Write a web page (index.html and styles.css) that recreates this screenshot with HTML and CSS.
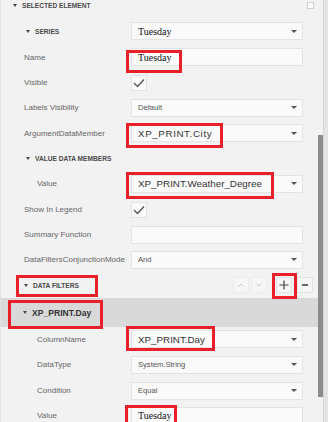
FILE: index.html
```html
<!DOCTYPE html>
<html lang="en">
<head>
    <meta charset="UTF-8">
    <title>Chart Designer - Properties</title>
    <link rel="stylesheet" href="styles.css">
</head>
<body>
    <div class="panel">
        <div class="head top-head">
            <span class="tri"></span>SELECTED ELEMENT
            <span class="corner-box"></span>
        </div>

        <div class="row h26">
            <div class="sub"><span class="tri"></span>SERIES</div>
            <div class="ctl select"><span class="serif">Tuesday</span><span class="caret"></span></div>
        </div>
        <div class="row h26">
            <div class="lbl">Name</div>
            <div class="ctl"><span class="serif">Tuesday</span><span class="mark m-name"></span></div>
        </div>
        <div class="row h25">
            <div class="lbl">Visible</div>
            <div class="check">
                <svg width="12" height="10" viewBox="0 0 12 10"><polyline points="1,5 4.5,8.5 11,1.5" fill="none" stroke="#555" stroke-width="1.4"/></svg>
            </div>
        </div>
        <div class="row h25">
            <div class="lbl">Labels Visibility</div>
            <div class="ctl select"><span class="small">Default</span><span class="caret"></span></div>
        </div>
        <div class="row h26">
            <div class="lbl">ArgumentDataMember</div>
            <div class="ctl select"><span class="big wide">XP_PRINT.City</span><span class="caret"></span><span class="mark m-city"></span></div>
        </div>

        <div class="head sub-head h24"><span class="tri"></span>VALUE DATA MEMBERS</div>

        <div class="row h27">
            <div class="lbl indent">Value</div>
            <div class="ctl select"><span class="big">XP_PRINT.Weather_Degree</span><span class="caret"></span><span class="mark m-value"></span></div>
        </div>
        <div class="row h25">
            <div class="lbl">Show In Legend</div>
            <div class="check">
                <svg width="12" height="10" viewBox="0 0 12 10"><polyline points="1,5 4.5,8.5 11,1.5" fill="none" stroke="#555" stroke-width="1.4"/></svg>
            </div>
        </div>
        <div class="row h25">
            <div class="lbl">Summary Function</div>
            <div class="ctl"></div>
        </div>
        <div class="row h25">
            <div class="lbl">DataFiltersConjunctionMode</div>
            <div class="ctl select"><span class="small">And</span><span class="caret"></span></div>
        </div>

        <div class="head filters-head">
            <span class="tri"></span>DATA FILTERS
            <span class="mark m-filters"></span>
            <div class="tools">
                <span class="btn faint">
                    <svg width="8" height="6" viewBox="0 0 8 6"><polyline points="1.5,4.5 4,2 6.5,4.5" fill="none" stroke="#c8c8c8" stroke-width="1"/></svg>
                </span>
                <span class="btn faint">
                    <svg width="8" height="6" viewBox="0 0 8 6"><polyline points="1.5,1.5 4,4 6.5,1.5" fill="none" stroke="#c8c8c8" stroke-width="1"/></svg>
                </span>
                <span class="btn plus">
                    <svg width="10" height="10" viewBox="0 0 10 10"><path d="M5 0.5v9M0.5 5h9" stroke="#444" stroke-width="1.2"/></svg>
                    <span class="mark m-plus"></span>
                </span>
                <span class="btn">
                    <svg width="8" height="8" viewBox="0 0 8 8"><path d="M1 4h6" stroke="#444" stroke-width="1.6"/></svg>
                </span>
            </div>
        </div>

        <div class="band">
            <span class="tri"></span>XP_PRINT.Day
            <span class="mark m-band"></span>
        </div>

        <div class="row h24">
            <div class="lbl indent">ColumnName</div>
            <div class="ctl select"><span class="big">XP_PRINT.Day</span><span class="caret"></span><span class="mark m-column"></span></div>
        </div>
        <div class="row h27">
            <div class="lbl indent">DataType</div>
            <div class="ctl select"><span class="small">System.String</span><span class="caret"></span></div>
        </div>
        <div class="row h25">
            <div class="lbl indent">Condition</div>
            <div class="ctl select"><span class="small">Equal</span><span class="caret"></span></div>
        </div>
        <div class="row h25">
            <div class="lbl indent">Value</div>
            <div class="ctl"><span class="serif">Tuesday</span><span class="mark m-filter-value"></span></div>
        </div>
    </div>

    <div class="scroll"><div class="thumb"></div></div>
    <div class="edge"></div>
</body>
</html>
```

FILE: styles.css
```css
body {
    margin: 0;
    width: 328px;
    height: 422px;
    overflow: hidden;
    display: flex;
    background-color: #f2f2f2;
    font-family: "Liberation Sans", Arial, sans-serif;
    color: #666;
}
.panel {
    width: 318px;
    flex: none;
    box-sizing: border-box;
    border-left: 1px solid #e2e2e2;
}
.scroll {
    width: 5px;
    flex: none;
}
.thumb {
    margin-top: 135px;
    height: 262px;
    background-color: #8c8c8c;
}
.edge {
    flex: 1;
    background-color: #e4e4e4;
    border-left: 1px solid #d6d6d6;
}

/* section headers */
.head {
    display: flex;
    align-items: center;
    font-size: 6.6px;
    font-weight: bold;
    color: #4a4a4a;
    position: relative;
}
.tri {
    width: 0;
    height: 0;
    border-left: 2px solid transparent;
    border-right: 2px solid transparent;
    border-top: 3px solid #444;
    margin-right: 5px;
}
.top-head {
    margin-top: -8px;
    height: 26px;
    padding-left: 12px;
}
.corner-box {
    width: 5px;
    height: 5px;
    margin-left: auto;
    margin-right: 4px;
    background-color: #fff;
    border: 1px solid #cfcfcf;
}
.sub-head {
    padding-left: 25px;
}
.sub {
    display: flex;
    align-items: center;
    padding-left: 25px;
    font-size: 6.6px;
    font-weight: bold;
    color: #4a4a4a;
}
.filters-head {
    height: 26px;
    padding-left: 23px;
}
.tools {
    margin-left: auto;
    padding-right: 5px;
    display: flex;
    align-items: center;
}
.btn {
    width: 16px;
    height: 16px;
    box-sizing: border-box;
    border: 1px solid #e2e2e2;
    background-color: #f6f6f6;
    display: flex;
    align-items: center;
    justify-content: center;
    position: relative;
    margin-left: 5px;
}
.btn.faint {
    border-color: #ececec;
    margin-left: 2px;
}
.btn.plus {
    margin-left: 9px;
}
.band {
    height: 29px;
    display: flex;
    align-items: center;
    padding-left: 22px;
    background-color: #d9d9d9;
    font-size: 8.6px;
    font-weight: bold;
    color: #333;
    position: relative;
}

/* property rows */
.row {
    display: grid;
    grid-template-columns: 130px 172px;
    align-items: center;
}
.h24 { height: 24px; }
.h25 { height: 25px; }
.h26 { height: 26px; }
.h27 { height: 27px; }
.lbl {
    padding-left: 23px;
    font-size: 8px;
    color: #666;
    white-space: nowrap;
}
.lbl.indent {
    padding-left: 36px;
}
.ctl {
    height: 18px;
    box-sizing: border-box;
    border: 1px solid #e3e3e3;
    background-color: #fafafa;
    display: flex;
    align-items: center;
    padding-left: 6px;
    position: relative;
}
.caret {
    margin-left: auto;
    margin-right: 5px;
    width: 0;
    height: 0;
    border-left: 3px solid transparent;
    border-right: 3px solid transparent;
    border-top: 3px solid #555;
}
.check {
    width: 16px;
    height: 16px;
    box-sizing: border-box;
    border: 1px solid #e3e3e3;
    background-color: #fafafa;
    display: flex;
    align-items: center;
    justify-content: center;
}
.serif {
    font-family: "Liberation Serif", "Times New Roman", serif;
    font-size: 10px;
    color: #111;
}
.small {
    font-size: 7.6px;
    color: #555;
}
.big {
    font-size: 9.8px;
    color: #333;
    white-space: nowrap;
}
.big.wide {
    letter-spacing: 0.6px;
}

/* red annotation boxes */
.mark {
    position: absolute;
    box-sizing: border-box;
    border: 3px solid #e8202a;
    z-index: 2;
}
.m-name { left: -6px; top: 1px; width: 56px; height: 23px; }
.m-city { left: -6px; top: -2px; width: 97px; height: 25px; }
.m-value { left: -6px; top: -4px; width: 148px; height: 27px; }
.m-filters { left: 15px; top: 3px; width: 82px; height: 22px; }
.m-plus { left: -5px; top: -5px; width: 25px; height: 26px; }
.m-band { left: 7px; top: 2px; width: 95px; height: 29px; }
.m-column { left: -6px; top: -5px; width: 89px; height: 25px; }
.m-filter-value { left: -7px; top: -3px; width: 52px; height: 24px; }
```
